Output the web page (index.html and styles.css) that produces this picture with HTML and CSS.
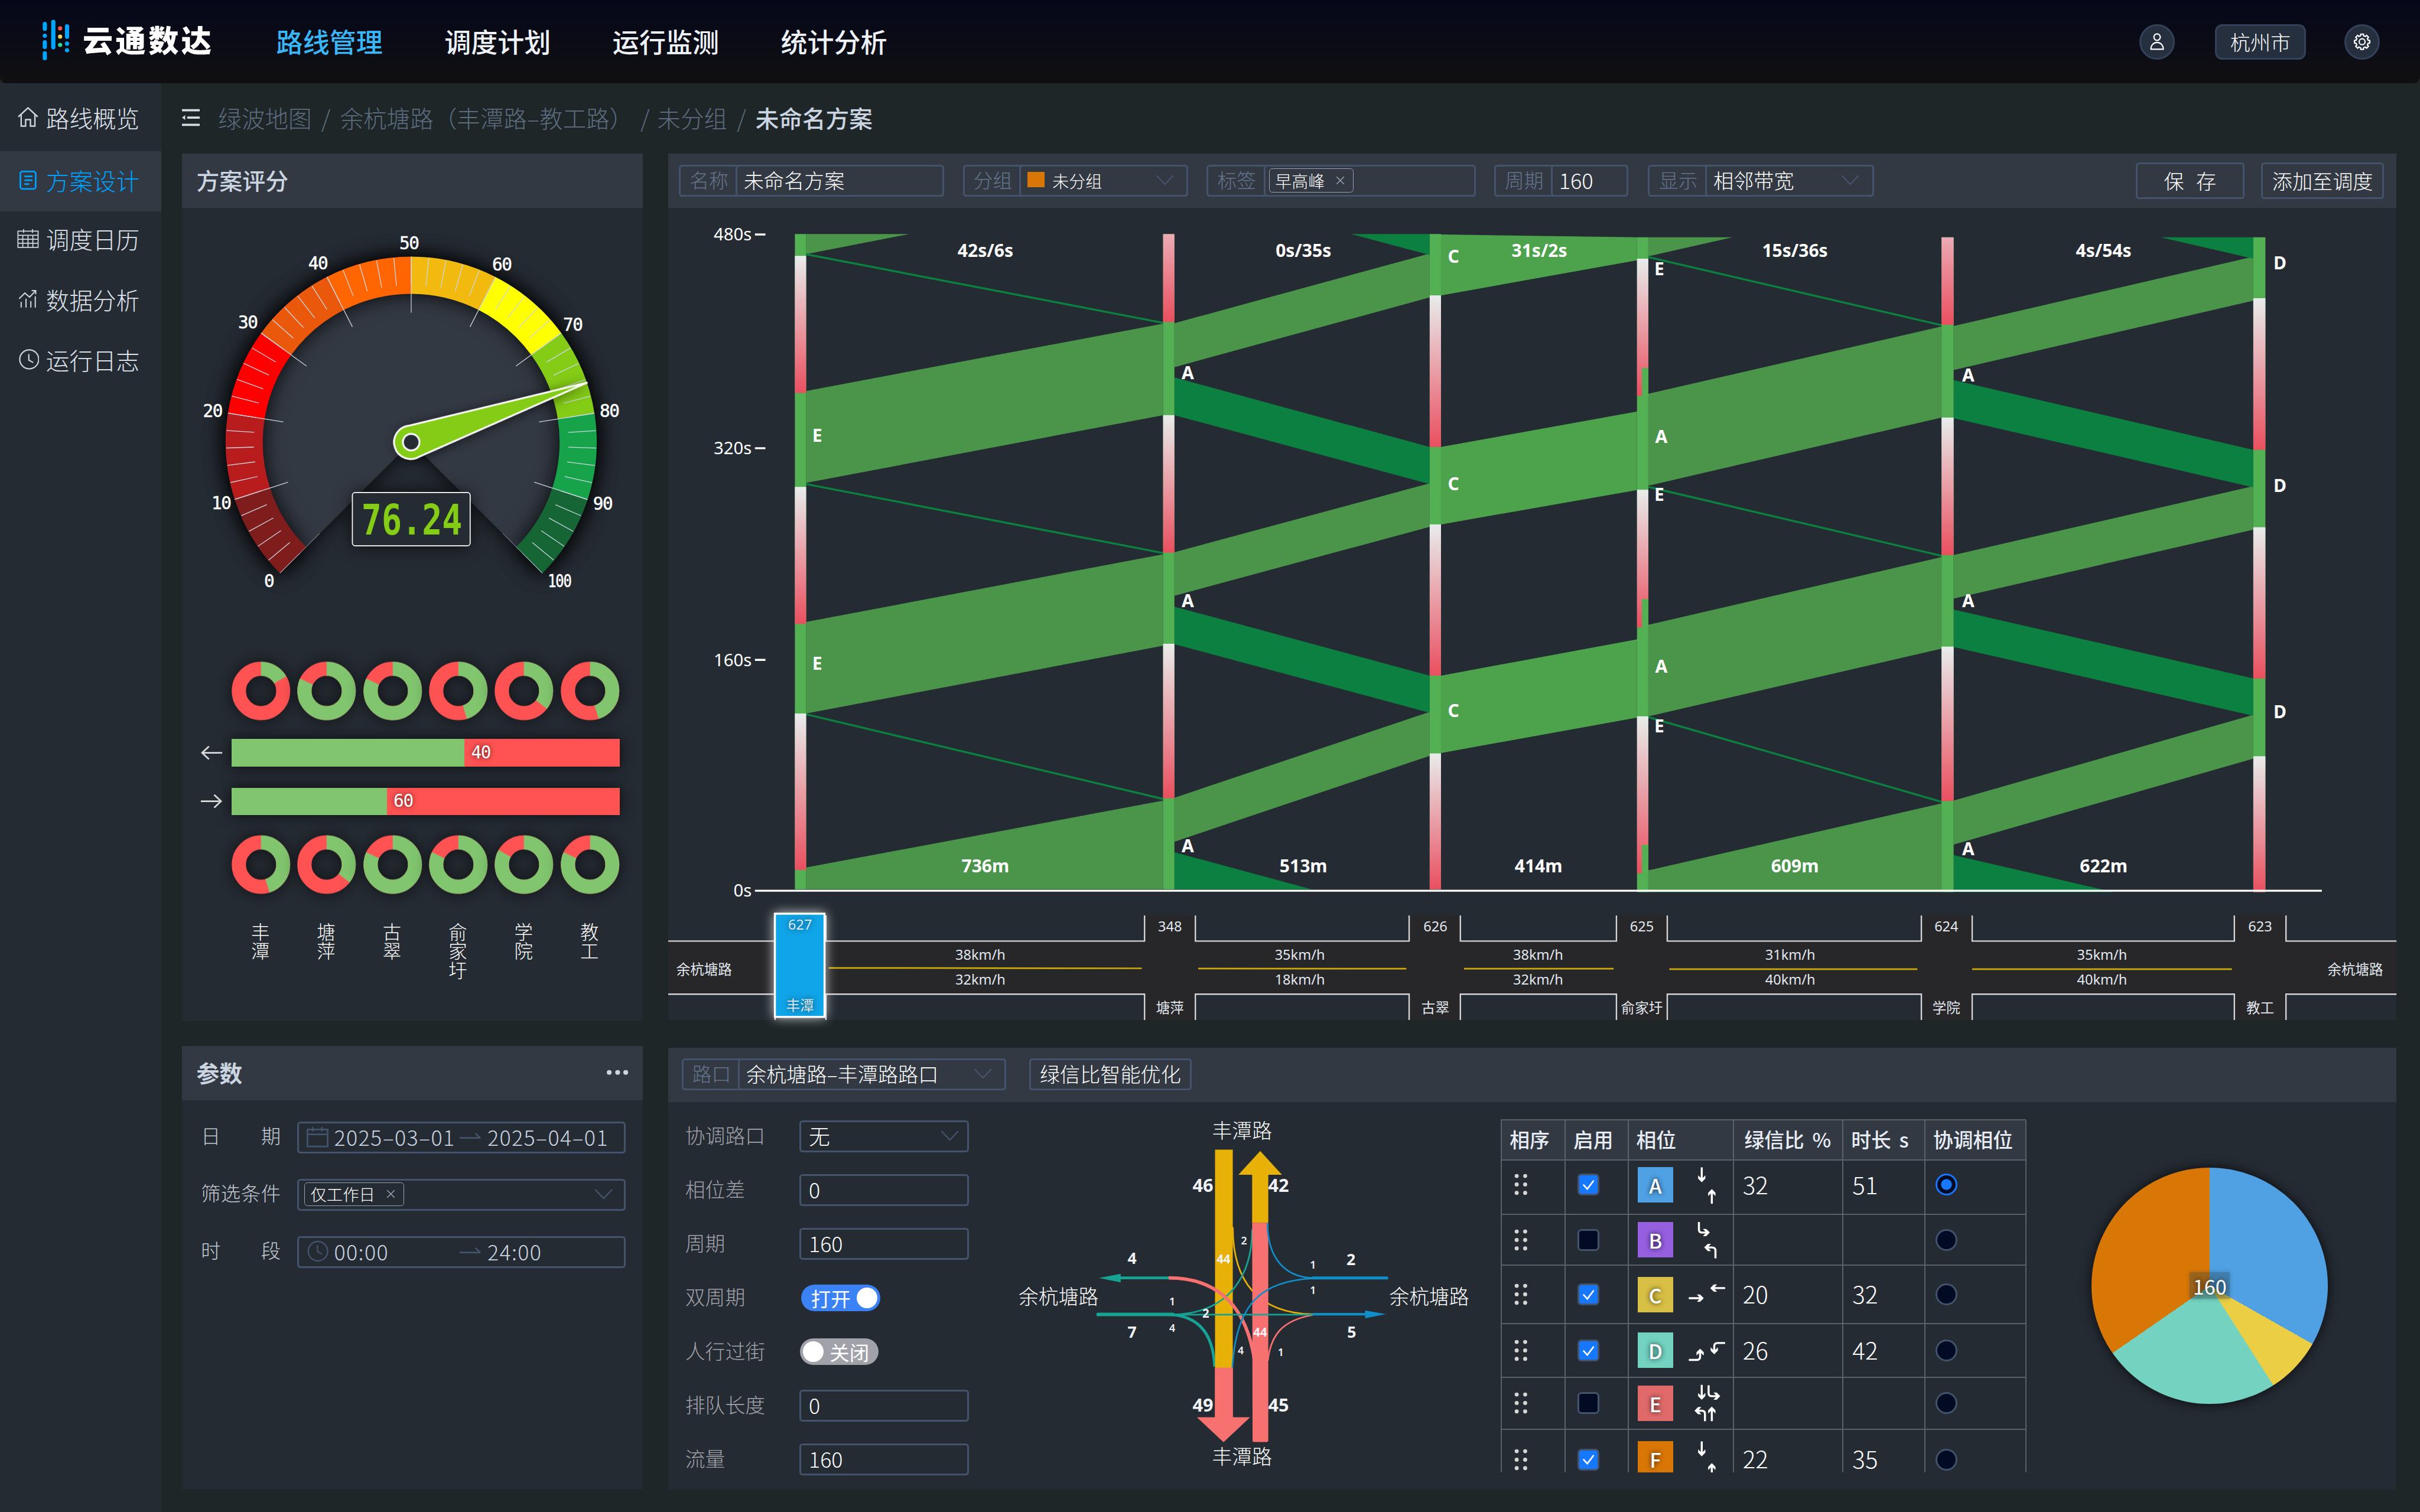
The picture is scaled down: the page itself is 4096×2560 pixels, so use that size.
FILE: index.html
```html
<!DOCTYPE html>
<html lang="zh-CN">
<head>
<meta charset="utf-8">
<title>云通数达 - 方案设计</title>
<link rel="stylesheet" href="styles.css">
</head>
<body>
<svg class="defs" width="0" height="0" aria-hidden="true">
  <defs>
    <linearGradient id="red" x1="0" y1="0" x2="0" y2="1"><stop offset="0" stop-color="#e8ecec"/><stop offset="1" stop-color="#ea4f5f"/></linearGradient>
    <linearGradient id="redCut" x1="0" y1="0" x2="0" y2="1"><stop offset="0" stop-color="#ebabb5"/><stop offset="1" stop-color="#ea4f5f"/></linearGradient>
    <path id="head" d="M0 0L-9 -9V-17L-2.5 -11H2.5L9 -17V-9Z"/>
    <symbol id="chevron" viewBox="0 0 46 28"><path d="M2 3L23 25L44 3" fill="none" stroke="#43536b" stroke-width="3.5"/></symbol>
    <symbol id="close" viewBox="0 0 24 24"><path d="M2 2L22 22M22 2L2 22" fill="none" stroke="#94a3b8" stroke-width="2.5"/></symbol>
    <symbol id="swap" viewBox="0 0 52 24"><path d="M0 14H51L39 3" fill="none" stroke="#43536b" stroke-width="4"/></symbol>
    <symbol id="grip" viewBox="0 0 34 54"><g fill="#d6d6d6"><circle cx="6" cy="6" r="5"/><circle cx="27" cy="6" r="5"/><circle cx="6" cy="27" r="5"/><circle cx="27" cy="27" r="5"/><circle cx="6" cy="48" r="5"/><circle cx="27" cy="48" r="5"/></g></symbol>
  </defs>
</svg>

<header class="topbar">
  <div class="brand">
    <svg class="brand-mark" viewBox="106 49 67 102">
      <g stroke="#00a6ff" stroke-width="10.4" stroke-linecap="round">
        <path d="M111.6 60V72M111.6 89.3V89.4M111.6 105.500V117M111.600 133V145M132.700 55V118M166.800 66V92M166.800 108.900V109M166.800 125.200V125.300"/>
      </g>
      <circle cx="149.600" cy="71" r="5.200" fill="#ff534b"/><circle cx="149.600" cy="91.500" r="5.200" fill="#f6d45c"/><circle cx="149.600" cy="112" r="5.200" fill="#2fd795"/>
    </svg>
    <span class="brand-name">云通数达</span>
  </div>
  <nav class="menu">
    <a class="menu-item is-active">路线管理</a>
    <a class="menu-item">调度计划</a>
    <a class="menu-item">运行监测</a>
    <a class="menu-item">统计分析</a>
  </nav>
  <div class="account">
    <span class="round-btn"><svg viewBox="0 0 44 48"><g fill="none" stroke="#fff" stroke-width="3.4" stroke-linejoin="round"><circle cx="22" cy="12" r="8.300"/><path d="M6 43.500C6 20 38 20 38 43.500Z"/></g></svg></span>
    <span class="city">杭州市</span>
    <span class="round-btn"><svg viewBox="0 0 44 44"><g fill="none" stroke="#fff" stroke-width="3.2" stroke-linejoin="round"><circle cx="22" cy="22" r="7.300"/><path d="M18.500 3H25.500V7L30 9L33 6L38 11L35 14L37 18.500H41V25.500H37L35 30L38 33L33 38L30 35L25.500 37V41H18.500V37L14 35L11 38L6 33L9 30L7 25.500H3V18.500H7L9 14L6 11L11 6L14 9L18.500 7Z"/></g></svg></span>
  </div>
</header>

<div class="shell">
  <aside class="sidebar">
    <a class="side-item"><svg viewBox="0 0 54 54"><path d="M3 26L27 4L51 26M10 21V49H21V33H33V49H44V21" fill="none" stroke="#cfd5df" stroke-width="3.500"/></svg>路线概览</a>
    <a class="side-item is-active"><svg viewBox="0 0 54 54"><g fill="none" stroke="#00a0ff" stroke-width="4"><rect x="8" y="5" width="38" height="43" rx="5"/><path d="M18 17H38M18 26.500H38M18 36H30"/></g></svg>方案设计</a>
    <a class="side-item"><svg viewBox="0 0 54 54"><path d="M2 8H52V48H2ZM2 18H52M2 28H52M2 38H52M14 18V48M27 18V48M39 18V48M16 3V12M38 3V12" fill="none" stroke="#cfd5df" stroke-width="2.600"/></svg>调度日历</a>
    <a class="side-item"><svg viewBox="0 0 54 54"><path d="M10 34V48M22 26V48M34 32V48M45 20V48M5 26L19 12L31 22L46 6M36 6H46V15" fill="none" stroke="#cfd5df" stroke-width="3"/></svg>数据分析</a>
    <a class="side-item"><svg viewBox="0 0 54 54"><g fill="none" stroke="#cfd5df" stroke-width="3.200"><circle cx="30" cy="27" r="23.500"/><path d="M29 14V29L40 35"/></g></svg>运行日志</a>
  </aside>

  <main class="content">
    <div class="crumbs">
      <svg class="crumb-icon" viewBox="0 0 44 44"><path d="M0 4H44M13 22H44M0 40H44" stroke="#d5dbe4" stroke-width="5.500"/><path d="M0 22L8 16V28Z" fill="#d5dbe4"/></svg>
      <span>绿波地图</span><i>/</i><span>余杭塘路（丰潭路–教工路）</span><i class="tight">/</i><span>未分组</span><i>/</i><b>未命名方案</b>
    </div>

    <div class="board">
      <div class="col-left">
        <section class="panel score">
          <h2 class="panel-head">方案评分</h2>
          <svg class="gauge" viewBox="451 515 1143 1125">
            <g transform="translate(1019.300 1096)">
              <g class="gauge-shadow">
                <path d="M0 0L-325.300 325.300A460 460 0 1 1 325.300 325.300Z" fill="#333943"/>
              </g>
              <g class="gauge-shadow ring" fill="none" stroke-width="92">
                <g transform="rotate(135)">
                  <circle r="414" pathLength="360" stroke-dasharray="27 333" stroke="#7f1d1d"/>
                  <circle r="414" pathLength="360" stroke-dasharray="27 333" stroke-dashoffset="-27" stroke="#b91c1c"/>
                  <circle r="414" pathLength="360" stroke-dasharray="27 333" stroke-dashoffset="-54" stroke="#ff0000"/>
                  <circle r="414" pathLength="360" stroke-dasharray="27 333" stroke-dashoffset="-81" stroke="#ea580c"/>
                  <circle r="414" pathLength="360" stroke-dasharray="27 333" stroke-dashoffset="-108" stroke="#ff6500"/>
                  <circle r="414" pathLength="360" stroke-dasharray="27 333" stroke-dashoffset="-135" stroke="#f2b90f"/>
                  <circle r="414" pathLength="360" stroke-dasharray="27 333" stroke-dashoffset="-162" stroke="#ffff00"/>
                  <circle r="414" pathLength="360" stroke-dasharray="27 333" stroke-dashoffset="-189" stroke="#84cc16"/>
                  <circle r="414" pathLength="360" stroke-dasharray="27 333" stroke-dashoffset="-216" stroke="#16a34a"/>
                  <circle r="414" pathLength="360" stroke-dasharray="27 333" stroke-dashoffset="-243" stroke="#166534"/>
                </g>
              </g>
              <path d="M-300.200 300.200A424.500 424.500 0 1 1 300.200 300.200" pathLength="270" fill="none" stroke="#cbd5e1" stroke-width="69" stroke-dasharray=".26 5.14" stroke-dashoffset=".13"/>
              <path d="M-276.100 276.100A390.500 390.500 0 1 1 276.100 276.100" pathLength="270" fill="none" stroke="#cbd5e1" stroke-width="139" stroke-dasharray=".28 26.72" stroke-dashoffset=".14"/>
              <g class="needle" transform="rotate(71.300)">
                <path d="M0 -460L-40.500 -8A41.500 41.500 0 1 0 40.500 -8Z" fill="#84cc16" stroke="#fff" stroke-width="4.500" stroke-linejoin="round"/>
                <circle r="20.500" fill="#252b33" stroke="#fff" stroke-width="4.500"/>
              </g>
            </g>
            <g class="lcd scale">
              <text x="666.500" y="1455">0</text><text x="548" y="1262">10</text><text x="527" y="1034">20</text><text x="614" y="814">30</text><text x="788" y="667">40</text><text x="1014" y="618">50</text><text x="1244" y="671">60</text><text x="1419.600" y="819">70</text><text x="1510.600" y="1034">80</text><text x="1494" y="1263">90</text><text x="1387" y="1456" textLength="58" lengthAdjust="spacingAndGlyphs">100</text>
            </g>
            <rect class="readout-box" x="873.500" y="1221" width="292" height="132" rx="7" fill="#252b33" stroke="#fff" stroke-width="2.500"/>
            <text class="lcd readout" x="1021" y="1325" textLength="250" lengthAdjust="spacingAndGlyphs">76.24</text>
          </svg>
          <div class="donuts">
            <svg viewBox="-73 -73 146 146"><circle r="55" stroke="#ff5252"/><circle r="55" stroke="#81c56e" pathLength="360" stroke-dasharray="60 300"/></svg>
            <svg viewBox="-73 -73 146 146"><circle r="55" stroke="#ff5252"/><circle r="55" stroke="#81c56e" pathLength="360" stroke-dasharray="295 65"/></svg>
            <svg viewBox="-73 -73 146 146"><circle r="55" stroke="#ff5252"/><circle r="55" stroke="#81c56e" pathLength="360" stroke-dasharray="295 65"/></svg>
            <svg viewBox="-73 -73 146 146"><circle r="55" stroke="#ff5252"/><circle r="55" stroke="#81c56e" pathLength="360" stroke-dasharray="163 197"/></svg>
            <svg viewBox="-73 -73 146 146"><circle r="55" stroke="#ff5252"/><circle r="55" stroke="#81c56e" pathLength="360" stroke-dasharray="128 232"/></svg>
            <svg viewBox="-73 -73 146 146"><circle r="55" stroke="#ff5252"/><circle r="55" stroke="#81c56e" pathLength="360" stroke-dasharray="163 197"/></svg>
          </div>
          <div class="ratio">
            <svg viewBox="0 0 54 34"><path d="M20 1L3 17L20 33M3 17H53" /></svg>
            <div class="ratio-bar"><div class="ratio-go" style="width:60%"></div><span class="lcd">40</span></div>
          </div>
          <div class="ratio">
            <svg viewBox="0 0 54 34"><path d="M33 1L50 17L33 33M50 17H0" /></svg>
            <div class="ratio-bar"><div class="ratio-go" style="width:40%"></div><span class="lcd">60</span></div>
          </div>
          <div class="donuts second">
            <svg viewBox="-73 -73 146 146"><circle r="55" stroke="#ff5252"/><circle r="55" stroke="#81c56e" pathLength="360" stroke-dasharray="163 197"/></svg>
            <svg viewBox="-73 -73 146 146"><circle r="55" stroke="#ff5252"/><circle r="55" stroke="#81c56e" pathLength="360" stroke-dasharray="128 232"/></svg>
            <svg viewBox="-73 -73 146 146"><circle r="55" stroke="#ff5252"/><circle r="55" stroke="#81c56e" pathLength="360" stroke-dasharray="295 65"/></svg>
            <svg viewBox="-73 -73 146 146"><circle r="55" stroke="#ff5252"/><circle r="55" stroke="#81c56e" pathLength="360" stroke-dasharray="295 65"/></svg>
            <svg viewBox="-73 -73 146 146"><circle r="55" stroke="#ff5252"/><circle r="55" stroke="#81c56e" pathLength="360" stroke-dasharray="300 60"/></svg>
            <svg viewBox="-73 -73 146 146"><circle r="55" stroke="#ff5252"/><circle r="55" stroke="#81c56e" pathLength="360" stroke-dasharray="295 65"/></svg>
          </div>
          <div class="names"><span>丰潭</span><span>塘萍</span><span>古翠</span><span>俞家圩</span><span>学院</span><span>教工</span></div>
        </section>

        <section class="panel params">
          <div class="panel-head spread"><h2>参数</h2><svg class="more" viewBox="0 0 54 14"><circle cx="6" cy="7" r="6"/><circle cx="27" cy="7" r="6"/><circle cx="47" cy="7" r="6"/></svg></div>
          <div class="param-form">
            <div class="param-row"><label><span>日</span><span>期</span></label>
              <div class="field"><svg class="f-icon" viewBox="0 0 54 54"><path d="M2 8H52V50H2ZM2 20H52M15 2V13M38 2V13" fill="none" stroke="#43536b" stroke-width="4"/></svg><span class="from date">2025–03–01</span><svg class="swap"><use href="#swap"/></svg><span class="date">2025–04–01</span></div></div>
            <div class="param-row"><label><span>筛</span><span>选</span><span>条</span><span>件</span></label>
              <div class="field"><span class="tag">仅工作日<svg><use href="#close"/></svg></span><svg class="chev"><use href="#chevron"/></svg></div></div>
            <div class="param-row"><label><span>时</span><span>段</span></label>
              <div class="field"><svg class="f-icon" viewBox="0 0 54 54"><g fill="none" stroke="#43536b" stroke-width="3.500"><circle cx="28" cy="27" r="24"/><path d="M27 12V28L38 34"/></g></svg><span class="from date">00:00</span><svg class="swap"><use href="#swap"/></svg><span class="date">24:00</span></div></div>
          </div>
        </section>
      </div>

      <div class="col-right">
        <section class="panel plan">
          <div class="panel-head tools">
            <div class="combo w-name"><span class="combo-label">名称</span><span class="combo-value">未命名方案</span></div>
            <div class="combo w-group"><span class="combo-label">分组</span><span class="combo-value"><i class="swatch"></i><em>未分组</em><svg class="chev"><use href="#chevron"/></svg></span></div>
            <div class="combo w-tags"><span class="combo-label">标签</span><span class="combo-value tags"><span class="tag">早高峰<svg><use href="#close"/></svg></span></span></div>
            <div class="combo w-cycle"><span class="combo-label">周期</span><span class="combo-value num">160</span></div>
            <div class="combo w-show"><span class="combo-label">显示</span><span class="combo-value">相邻带宽<svg class="chev"><use href="#chevron"/></svg></span></div>
            <button class="btn save">保存</button>
            <button class="btn add">添加至调度</button>
          </div>
          <svg class="wave" viewBox="1656 514 4285 2015">
            <!-- green bands between neighbouring junctions -->
            <g fill="#4a954a">
              <path d="M1998 579H2253L1998 628.500ZM1998 968L2883 801V1028L1998 1196ZM1998 1541L2883 1373V1600L1998 1768ZM1998 2150L2883 1984V2204H1998Z"/>
              <path d="M2911 800L3544 627V736L2911 909ZM2911 1368L3544 1197V1305L2911 1476ZM2911 1977L3544 1764V1873L2911 2086Z"/>
              <path d="M4086 587H4295L4086 634ZM4086 975L4813 808V1034L4086 1203ZM4086 1548L4813 1380V1607L4086 1775ZM4086 2157L4813 1991V2211H4086Z"/>
              <path d="M4843 807L5586 635V744L4843 916ZM4843 1375L5586 1204V1312L4843 1483ZM4843 1984L5586 1771V1880L4843 2093Z"/>
            </g>
            <path fill="#4ca34c" d="M3572 580L4058 587V644L3572 731ZM3572 1107L4058 1019V1214L3572 1299ZM3572 1674L4058 1584V1778L3572 1866Z"/>
            <g fill="#0c8040">
              <path d="M3349 579H3544V631ZM2911 934.500L3544 1107V1199L2911 1028ZM2911 1503L3544 1674V1766L2911 1596ZM2911 2112L3251 2204H2911Z"/>
              <path d="M5356 587H5586V640ZM4843 941L5586 1114V1207L4843 1035.500ZM4843 1510L5586 1681V1773.500L4843 1603ZM4843 2119L5240 2211H4843Z"/>
            </g>
            <path stroke="#0c8040" stroke-width="5" fill="none" d="M1998 629L2883 799M1998 1199L2883 1370M1998 1770L2883 1980M4086 636L4813 805M4086 1206L4813 1377M4086 1777L4813 1987"/>
            <!-- signal timing bars -->
            <g fill="#53b153">
              <path d="M1970 579h28V2204h-28ZM2883 579h28V2204h-28ZM3544 579h28V2204h-28ZM4058 587h28V2211h-28ZM4813 587h30V2211h-30ZM5586 587h30V2211h-30Z"/>
            </g>
            <g fill="url(#red)">
              <rect x="1970" y="633" width="28" height="340"/><rect x="1970" y="1206" width="28" height="340"/><rect x="1970" y="1768" width="28" height="388"/>
              <rect x="2883" y="1028" width="28" height="341"/><rect x="2883" y="1595" width="28" height="383"/>
              <rect x="3544" y="731" width="28" height="376"/><rect x="3544" y="1299" width="28" height="375"/><rect x="3544" y="1867" width="28" height="337"/>
              <rect x="4058" y="640" width="28" height="340"/><rect x="4058" y="1213" width="28" height="341"/><rect x="4058" y="1775" width="28" height="389"/>
              <rect x="4813" y="1034" width="30" height="341"/><rect x="4813" y="1602" width="30" height="383"/>
              <rect x="5586" y="738" width="30" height="376"/><rect x="5586" y="1306" width="30" height="375"/><rect x="5586" y="1874" width="30" height="337"/>
            </g>
            <rect x="2883" y="579" width="28" height="218" fill="url(#redCut)"/><rect x="4813" y="587" width="30" height="217" fill="url(#redCut)"/>
            <path fill="#53b153" d="M4070 911h16v70h-16ZM4070 1484h16v71h-16ZM4070 2094h16v71h-16Z"/>
            <path stroke="#fff" stroke-width="5" d="M1871 580H1897M1871 1110H1897M1871 1635H1897M1871 2207.500H5756"/>
            <g class="axis"><text x="1863" y="595">480s</text><text x="1863" y="1125">320s</text><text x="1863" y="1650">160s</text><text x="1863" y="2222">0s</text></g>
            <g class="mark mid">
              <text x="2442.500" y="635">42s/6s</text><text x="3231" y="635">0s/35s</text><text x="3816" y="635">31s/2s</text><text x="4449.500" y="635">15s/36s</text><text x="5215" y="635">4s/54s</text>
              <text x="2442.500" y="2162">736m</text><text x="3231" y="2162">513m</text><text x="3814" y="2162">414m</text><text x="4449.500" y="2162">609m</text><text x="5215" y="2162">622m</text>
            </g>
            <g class="mark">
              <text x="2013" y="1094">E</text><text x="2013" y="1660">E</text>
              <text x="2929" y="939">A</text><text x="2929" y="1504">A</text><text x="2929" y="2112">A</text>
              <text x="3589" y="650">C</text><text x="3589" y="1214">C</text><text x="3589" y="1776">C</text>
              <text x="4101" y="681">E</text><text x="4103" y="1097">A</text><text x="4101" y="1241">E</text><text x="4103" y="1667">A</text><text x="4101" y="1815">E</text>
              <text x="4864" y="944">A</text><text x="4864" y="1504">A</text><text x="4864" y="2120">A</text>
              <text x="5636" y="666">D</text><text x="5636" y="1219">D</text><text x="5636" y="1780">D</text>
            </g>
            <!-- road strip -->
            <path fill="#272628" d="M1656 2332.500H5941V2464H1656ZM2837 2269H2963V2528H2837ZM3493 2269H3620V2528H3493ZM4007 2269H4133V2528H4007ZM4763 2269H4889V2528H4763ZM5539 2269H5667V2528H5539Z"/>
            <path fill="none" stroke="#d4d4d8" stroke-width="3.500" d="M1656 2332.500H1921V2269M2047 2269V2332.500H2837V2269M2963 2269V2332.500H3493V2269M3620 2269V2332.500H4007V2269M4133 2269V2332.500H4763V2269M4889 2269V2332.500H5539V2269M5667 2269V2332.500H5941M1656 2464H1921V2528M2047 2528V2464H2837V2528M2963 2528V2464H3493V2528M3620 2528V2464H4007V2528M4133 2528V2464H4763V2528M4889 2528V2464H5539V2528M5667 2528V2464H5941"/>
            <path stroke="#cdaa08" stroke-width="4" d="M2054 2399L2830 2400M2970 2400.500L3486 2401M3629 2401H4000M4138 2402H4753M4889 2402H5533"/>
            <rect class="here" x="1920.500" y="2264.500" width="123" height="256" fill="#10a5e9" stroke="#fff" stroke-width="5"/>
            <g class="road mid">
              <g class="here-text"><text x="1983" y="2304">627</text><text x="1983" y="2505">丰潭</text></g>
              <text x="2900" y="2309">348</text><text x="3558" y="2309">626</text><text x="4070" y="2309">625</text><text x="4825" y="2309">624</text><text x="5603" y="2309">623</text>
              <text x="2900" y="2511">塘萍</text><text x="3558" y="2511">古翠</text><text x="4070" y="2511">俞家圩</text><text x="4825" y="2511">学院</text><text x="5603" y="2511">教工</text>
              <text x="1745" y="2415">余杭塘路</text><text x="5839" y="2415">余杭塘路</text>
              <text x="2430" y="2379">38km/h</text><text x="3222" y="2379">35km/h</text><text x="3813" y="2379">38km/h</text><text x="4438" y="2379">31km/h</text><text x="5211" y="2379">35km/h</text>
              <text x="2430" y="2441">32km/h</text><text x="3222" y="2441">18km/h</text><text x="3813" y="2441">32km/h</text><text x="4438" y="2441">40km/h</text><text x="5211" y="2441">40km/h</text>
            </g>
          </svg>
        </section>

        <section class="panel junction">
          <div class="panel-head tools">
            <div class="combo w-junction"><span class="combo-label">路口</span><span class="combo-value">余杭塘路–丰潭路路口<svg class="chev"><use href="#chevron"/></svg></span></div>
            <button class="btn smart">绿信比智能优化</button>
          </div>
          <div class="junction-body">
            <div class="j-form">
              <div class="j-row"><label>协调路口</label><div class="field">无<svg class="chev"><use href="#chevron"/></svg></div></div>
              <div class="j-row"><label>相位差</label><div class="field">0</div></div>
              <div class="j-row"><label>周期</label><div class="field">160</div></div>
              <div class="j-row"><label>双周期</label><div class="switch on">打开<i></i></div></div>
              <div class="j-row"><label>人行过街</label><div class="switch"><i></i>关闭</div></div>
              <div class="j-row"><label>排队长度</label><div class="field">0</div></div>
              <div class="j-row"><label>流量</label><div class="field">160</div></div>
            </div>

            <svg class="flow" viewBox="2500 2731 1150 964">
              <g fill="none">
                <path d="M2903 3261C2980 3266 3008 3320 3011 3390" stroke="#16a394" stroke-width="7"/>
                <path d="M3056 3044C3056 3180 3120 3258 3254 3260" stroke="#e8b108" stroke-width="4"/>
              </g>
              <path d="M3012 2852H3056V3393H3012Z" fill="#e8b108"/>
              <path d="M3012 3393H3056V3516H3098L3033 3577L2968 3516H3012Z" fill="#f87171" stroke="#f87171" stroke-linejoin="round"/>
              <path d="M2907 3261C3050 3258 3104 3160 3104 3050" fill="none" stroke="#16a394" stroke-width="4"/>
              <path d="M2897 3170C3000 3170 3085 3220 3109 3369" fill="none" stroke="#f87171" stroke-width="8.500"/>
              <path d="M3104 3033V2914H3070L3124 2855L3178 2914H3144V3033Z" fill="#e8b108"/>
              <path d="M3104 3033H3144V3573Q3144 3577 3140 3577H3109Q3105 3577 3105 3573Z" fill="#f87171"/>
              <path d="M3143 3375C3150 3310 3180 3275 3254 3262" fill="none" stroke="#f87171" stroke-width="4"/>
              <path d="M2907 3261H3254" stroke="#16a394" stroke-width="4"/>
              <path d="M2722 3260.500H2907" stroke="#16a394" stroke-width="9" stroke-linecap="round"/>
              <path d="M2897 3170H2776" stroke="#16a394" stroke-width="7"/><path d="M2724 3170L2778 3160V3181Z" fill="#16a394"/>
              <g fill="none" stroke="#118dc8" stroke-width="4">
                <path d="M3259 3170C3185 3170 3142 3120 3142 3034"/>
                <path d="M3259 3171C3130 3176 3064 3230 3055 3392"/>
              </g>
              <path d="M3255 3170H3438" stroke="#118dc8" stroke-width="7.500" stroke-linecap="round"/>
              <path d="M3254 3260H3386" stroke="#118dc8" stroke-width="6"/><path d="M3384 3250.500V3270L3436 3260Z" fill="#118dc8"/>
              <g class="count big"><text x="2982" y="2956">46</text><text x="3169.500" y="2956">42</text><text x="2982" y="3501">49</text><text x="3169.500" y="3501">45</text></g>
              <g class="count mid"><text x="2806.500" y="3136">4</text><text x="2806.500" y="3318">7</text><text x="3349" y="3138">2</text><text x="3351" y="3318">5</text></g>
              <g class="count on"><text x="3033" y="3134">44</text><text x="3124" y="3315">44</text><text x="2989" y="3269">2</text></g>
              <g class="count small"><text x="3084" y="3087">2</text><text x="3255" y="3147">1</text><text x="3255" y="3210">1</text><text x="2906" y="3238">1</text><text x="2906" y="3304">4</text><text x="3076" y="3359">4</text><text x="3175" y="3364">1</text></g>
              <g class="street"><text x="3079" y="2824">丰潭路</text><text x="3079" y="3632">丰潭路</text><text x="2624" y="3235">余杭塘路</text><text x="3543" y="3235">余杭塘路</text></g>
            </svg>

            <div class="phases">
              <div class="ph-row ph-head"><div>相序</div><div>启用</div><div>相位</div><div>绿信比 %</div><div>时长 s</div><div>协调相位</div></div>
              <div class="ph-row r-a"><div><svg class="grip"><use href="#grip"/></svg></div><div><span class="check on"><svg viewBox="0 0 40 40"><path d="M7 20L17 31L33 10"/></svg></span></div><div><b class="phase p-a">A</b><svg class="moves" viewBox="0 0 105 100"><path d="M40 8V36M65 98V70"/><use href="#head" transform="translate(40 45)"/><use href="#head" transform="translate(65 62) rotate(180)"/></svg></div><div>32</div><div>51</div><div><span class="radio on"></span></div></div>
              <div class="ph-row r-b"><div><svg class="grip"><use href="#grip"/></svg></div><div><span class="check"></span></div><div><b class="phase p-b">B</b><svg class="moves" viewBox="0 0 105 100"><path d="M33 6V24Q33 32 41 32H50M74 96V77Q74 69 66 69H56"/><use href="#head" transform="translate(60 32) rotate(-90)"/><use href="#head" transform="translate(46 69) rotate(90)"/></svg></div><div></div><div></div><div><span class="radio"></span></div></div>
              <div class="ph-row r-c"><div><svg class="grip"><use href="#grip"/></svg></div><div><span class="check on"><svg viewBox="0 0 40 40"><path d="M7 20L17 31L33 10"/></svg></span></div><div><b class="phase p-c">C</b><svg class="moves" viewBox="0 0 105 100"><path d="M8 60H36M98 35H70"/><use href="#head" transform="translate(45 60) rotate(-90)"/><use href="#head" transform="translate(61 35) rotate(90)"/></svg></div><div>20</div><div>32</div><div><span class="radio"></span></div></div>
              <div class="ph-row r-d"><div><svg class="grip"><use href="#grip"/></svg></div><div><span class="check on"><svg viewBox="0 0 40 40"><path d="M7 20L17 31L33 10"/></svg></span></div><div><b class="phase p-d">D</b><svg class="moves" viewBox="0 0 105 100"><path d="M8 74H28Q36 74 36 66V56M98 32H79Q71 32 71 40V50"/><use href="#head" transform="translate(36 46) rotate(180)"/><use href="#head" transform="translate(71 60)"/></svg></div><div>26</div><div>42</div><div><span class="radio"></span></div></div>
              <div class="ph-row r-e"><div><svg class="grip"><use href="#grip"/></svg></div><div><span class="check"></span></div><div><b class="phase p-e">E</b><svg class="moves" viewBox="0 0 105 100"><path d="M40 4V32M57 5V24Q57 32 65 32H76M48 94V76Q48 68 40 68H32M65 94V68"/><use href="#head" transform="translate(40 41)"/><use href="#head" transform="translate(86 32) rotate(-90)"/><use href="#head" transform="translate(22 68) rotate(90)"/><use href="#head" transform="translate(65 58) rotate(180)"/></svg></div><div></div><div></div><div><span class="radio"></span></div></div>
              <div class="ph-row r-f"><div><svg class="grip"><use href="#grip"/></svg></div><div><span class="check on"><svg viewBox="0 0 40 40"><path d="M7 20L17 31L33 10"/></svg></span></div><div><b class="phase p-f">F</b><svg class="moves" viewBox="0 0 105 85"><path d="M40 8V36M65 98V70"/><use href="#head" transform="translate(40 45)"/><use href="#head" transform="translate(65 62) rotate(180)"/></svg></div><div>22</div><div>35</div><div><span class="radio"></span></div></div>
            </div>

            <div class="pie-wrap"><div class="pie"><span>160</span></div></div>
          </div>
        </section>
      </div>
    </div>
  </main>
</div>
</body>
</html>
```
FILE: styles.css
```css
/* 1rem = 1/60 of the window width, so the whole board scales with the window */
html { font-size: calc(100vw / 60); }
* { box-sizing: border-box; }
body {
  margin: 0; width: 60rem; height: 37.5rem; overflow: hidden;
  background: #1e2628; color: #fff;
  font-family: "Noto Sans CJK SC", "Noto Sans", sans-serif; font-weight: 300; font-size: .5rem; line-height: 1;
}
h2 { margin: 0; font-size: .57rem; font-weight: 500; line-height: 1; }
i, em { font-style: normal; }
svg { display: block; flex: none; }
.defs { height: 0; float: left; }

.topbar {
  display: flex; align-items: center; height: 2.07rem; padding: 0 1rem 0 1.06rem;
  background: linear-gradient(#06071a, #101012); border-radius: 0 0 .16rem .16rem;
}
.brand { display: flex; align-items: center; width: 5.79rem; margin-top: -.07rem; }
.brand-mark { width: .67rem; height: 1.02rem; margin-right: .32rem; }
.brand-name { font-size: .75rem; font-weight: 900; letter-spacing: .065rem; white-space: nowrap; padding-bottom: .05rem; }
.menu { display: flex; gap: 1.53rem; flex: 1; padding-bottom: .03rem; }
.menu-item { font-size: .66rem; font-weight: 500; color: #eef2f9; }
.menu-item.is-active { color: #38b6f6; }
.account { display: flex; align-items: center; gap: .97rem; }
.round-btn {
  display: flex; align-items: center; justify-content: center; width: .88rem; height: .88rem;
  border-radius: 50%; background: #262f3d; border: .045rem solid #33415a;
}
.round-btn svg { width: .44rem; height: .46rem; }
.city {
  display: flex; align-items: center; justify-content: center; width: 2.25rem; height: .88rem; margin: 0 -.02rem 0 .03rem; padding-bottom: .03rem;
  border-radius: .18rem; background: #262f3d; border: .045rem solid #33415a; font-size: .5rem;
}

.shell { display: flex; height: 35.43rem; }
.sidebar { width: 4rem; background: #252b33; padding-top: .12rem; color: #dfe4ec; }
.side-item { display: flex; align-items: center; gap: .17rem; height: 1.5rem; padding: 0 0 .06rem .43rem; font-size: .58rem; }
.side-item svg { width: .54rem; height: .54rem; }
.side-item.is-active { margin: .06rem 0 -.05rem; background: #333943; color: #00a0ff; }

.content { flex: 1; padding-left: .51rem; }
.crumbs { display: flex; align-items: center; height: 1.74rem; padding-bottom: .05rem; font-size: .58rem; color: #5d6b7f; white-space: nowrap; }
.crumbs i { width: .7rem; text-align: center; }
.crumbs i.tight { width: .6rem; }
.crumbs b { font-weight: 500; color: #cbd5e1; }
.crumb-icon { width: .44rem; height: .44rem; margin-right: .46rem; }

.board { display: flex; gap: .63rem; align-items: flex-start; }
.col-left { width: 11.43rem; display: flex; flex-direction: column; gap: .62rem; }
.col-right { width: 42.85rem; display: flex; flex-direction: column; gap: .69rem; }
.panel { background: #252b33; }
.panel-head { display: flex; align-items: center; height: 1.34rem; padding: 0 .36rem .04rem; background: #333943; color: #cbd5e1; }
.spread { justify-content: space-between; }
.more { width: .54rem; height: .14rem; fill: #cbd5e1; }

/* score panel */
.score { height: 21.52rem; }
.gauge { width: 11.43rem; height: 11.25rem; }
.gauge-shadow { filter: drop-shadow(0 0 26px rgba(0, 0, 0, .85)); }
.needle { filter: drop-shadow(4px -4px 14px rgba(0, 0, 0, .55)); }
.readout-box { filter: drop-shadow(0 0 20px rgba(0, 0, 0, .7)); }
.lcd { font-family: "DejaVu Sans Mono", monospace; font-weight: 400; fill: #fff; text-anchor: middle; }
.scale { font-size: 43px; letter-spacing: -2px; stroke: #fff; stroke-width: .8px; }
.readout { font-size: 103px; fill: #84cc16; font-weight: 700; }
.donuts { display: flex; justify-content: space-between; padding: 0 .58rem 0 1.23rem; }
.donuts svg { width: 1.46rem; height: 1.46rem; transform: rotate(-90deg); overflow: visible; filter: drop-shadow(0 0 .2rem rgba(0, 0, 0, .6)); }
.donuts circle { fill: none; stroke-width: 35; }
.donuts.second { margin-top: .5rem; }
.ratio { display: flex; align-items: center; gap: .22rem; margin-top: .53rem; padding: 0 .58rem 0 .47rem; }
.donuts + .ratio { margin-top: .47rem; }
.ratio > svg { width: .54rem; height: .34rem; fill: none; stroke: #dcdcdc; stroke-width: 4; }
.ratio-bar { display: flex; align-items: center; flex: 1; height: .68rem; background: #ff5252; box-shadow: 0 0 .35rem rgba(0, 0, 0, .7); }
.ratio-go { height: 100%; background: #81c56e; }
.ratio-bar .lcd { margin-left: .17rem; font-size: .43rem; letter-spacing: -.02rem; text-shadow: 0 0 .12rem rgba(0, 0, 0, .7); }
.names { display: flex; justify-content: space-between; padding: .7rem .6rem 0 1.21rem; font-size: .46rem; }
.names span { width: 1.46rem; display: flex; align-items: center; writing-mode: vertical-rl; letter-spacing: .02rem; line-height: 1.46rem; }

/* fields */
.field {
  display: flex; align-items: center; height: .79rem; padding: 0 .19rem .03rem; border: .045rem solid #43536b;
  border-radius: .08rem; font-size: .525rem; white-space: nowrap;
}
.date { letter-spacing: .02rem; margin-right: -.02rem; }
.chev { width: .46rem; height: .28rem; margin-left: auto; }
.tag {
  display: flex; align-items: center; gap: .28rem; height: .6rem; padding: 0 .2rem 0 .14rem;
  border: .02rem solid #94a3b8; border-radius: .08rem; font-size: .41rem;
}
.tag svg { width: .22rem; height: .22rem; }

/* parameters panel */
.params { height: 11rem; }
.params h2 { font-weight: 700; }
.param-form { display: flex; flex-direction: column; gap: .63rem; padding: .53rem .42rem 0 .47rem; }
.param-row { display: flex; justify-content: space-between; }
.param-row label { display: flex; justify-content: space-between; width: 1.98rem; margin-top: .09rem; font-size: .49rem; color: #c3c9d3; }
.param-row .field { width: 8.15rem; color: #cbd5e1; padding-right: .28rem; }
.param-row .tag { margin-left: -.06rem; color: #fff; font-size: .4rem; }
.f-icon { width: .54rem; height: .54rem; margin-right: .14rem; }
.from { width: 3.14rem; }
.swap { width: .52rem; height: .24rem; margin-right: .16rem; }

/* toolbar */
.tools { padding: 0 .31rem 0 .265rem; }
.junction .tools { padding-left: .33rem; padding-bottom: .04rem; }
.combo { display: flex; height: .79rem; border: .045rem solid #43536b; border-radius: .08rem; font-size: .5rem; color: #fff; }
.combo-label { display: flex; align-items: center; justify-content: center; padding-bottom: .03rem; color: #64748b; font-size: .48rem; }
.combo-value {
  display: flex; align-items: center; flex: 1; margin: -.045rem; padding: 0 .31rem .04rem .16rem;
  border: .045rem solid #43536b; border-radius: .08rem; white-space: nowrap;
}
.combo-value.tags { padding: 0 0 0 .09rem; }
.combo-value.num { font-size: .53rem; }
.combo em { font-size: .41rem; margin: .04rem 0 0 .2rem; }
.swatch { width: .42rem; height: .38rem; background: #d97706; }
.w-name { width: 6.58rem; margin-right: .465rem; } .w-name .combo-label { width: 1.4rem; }
.w-group { width: 5.58rem; margin-right: .45rem; } .w-group .combo-label { width: 1.39rem; }
.w-tags { width: 6.68rem; margin-right: .45rem; } .w-tags .combo-label { width: 1.42rem; }
.w-cycle { width: 3.33rem; margin-right: .49rem; } .w-cycle .combo-label { width: 1.41rem; }
.w-show { width: 5.6rem; margin-right: auto; } .w-show .combo-label { width: 1.42rem; }
.w-junction { width: 8.05rem; margin-right: .57rem; } .w-junction .combo-label { width: 1.4rem; }
.btn {
  height: .9rem; padding: 0 0 .03rem; border: .045rem solid #43536b; border-radius: .08rem; background: none; color: #fff;
  font: inherit; font-size: .5rem; white-space: nowrap;
}
.save { width: 2.7rem; margin-right: .41rem; letter-spacing: .3rem; text-indent: .3rem; }
.add { width: 3.05rem; }
.smart { width: 4.02rem; height: .79rem; }

/* green wave chart */
.plan { height: 21.49rem; }
.wave { width: 42.85rem; height: 20.15rem; overflow: visible; font-family: "Noto Sans", "Noto Sans CJK SC", sans-serif; }
.mid { text-anchor: middle; }
.axis { font-size: 43px; font-weight: 400; fill: #fff; text-anchor: end; }
.mark { font-size: 44px; font-weight: 700; fill: #fff; }
.road { font-size: 34.500px; font-weight: 400; fill: #e2e8f0; }
.here { filter: drop-shadow(0 0 14px rgba(255, 255, 255, .75)); }
.here-text { filter: drop-shadow(0 0 8px rgba(0, 0, 0, .6)); }

/* junction panel */
.junction { height: 10.97rem; }
.junction-body { display: flex; height: 9.63rem; }
.j-form { width: 8.44rem; padding: .46rem 0 0 .42rem; }
.j-row { display: flex; align-items: center; height: .79rem; margin-bottom: .545rem; }
.j-row label { width: 2.83rem; font-size: .495rem; color: #a1a1aa; margin-top: -.06rem; }
.j-row .field { width: 4.2rem; }
.switch {
  display: flex; align-items: center; justify-content: space-between; width: 1.96rem; height: .67rem; margin-left: .05rem;
  padding: 0 .08rem 0 .24rem; border-radius: .34rem; background: #a1a1aa; font-size: .49rem; font-weight: 400;
}
.switch:not(.on) { padding: 0 .24rem 0 .08rem; margin-left: .01rem; }
.switch.on { background: #3b82f6; }
.switch i { width: .51rem; height: .51rem; border-radius: 50%; background: #fff; }

.flow { width: 11.5rem; height: 9.64rem; margin-top: -.02rem; }
.count { font-family: "Noto Sans", sans-serif; font-weight: 700; fill: #f1f3f8; text-anchor: middle; }
.count.big { font-size: 45px; }
.count.mid { font-size: 39px; }
.count.on { font-size: 30px; }
.count.small { font-size: 26px; font-weight: 600; }
.street { font-size: 49.500px; fill: #fff; text-anchor: middle; }

.phases { width: 13.02rem; height: 8.76rem; margin: .43rem 0 0 .7rem; border: solid #5c6069; border-width: .04rem 0 0 .04rem; font-size: .59rem; }
.ph-row { display: grid; grid-template-columns: 1.58rem 1.56rem 2.61rem 2.72rem 2.03rem 2.5rem; }
.ph-row > div { display: flex; align-items: center; padding-left: .22rem; border: solid #5c6069; border-width: 0 .04rem .04rem 0; }
.ph-row > div:nth-child(4):not(:empty), .ph-row > div:nth-child(5):not(:empty) { padding-bottom: .04rem; }
.ph-head { height: 1rem; background: #333943; color: #e8edf5; font-size: .495rem; font-weight: 500; white-space: nowrap; }
.ph-head > div { padding: 0 0 .04rem .19rem; word-spacing: .09rem; }
.ph-head > div:nth-child(4) { padding-left: .26rem; }
.r-a { height: 1.35rem; } .ph-row.r-a > div:nth-child(n) { padding-bottom: .14rem; }
.r-b { height: 1.26rem; } .r-c { height: 1.44rem; } .r-d { height: 1.33rem; } .r-e { height: 1.3rem; } .r-f { height: 1.04rem; }
.r-f > div { align-items: flex-start; padding-top: .46rem; border-bottom: 0; }
.r-f > div:nth-child(3) { padding-top: .27rem; }
.r-f > div:nth-child(4), .r-f > div:nth-child(5) { padding-top: .41rem; }
.ph-row > div:nth-child(1):has(.grip) { padding-left: .31rem; }
.ph-row > div:nth-child(2):has(.check) { padding-left: .3rem; }
.ph-row > div:nth-child(6):has(.radio) { padding-left: .25rem; }
.grip { width: .34rem; height: .54rem; }
.check { display: flex; align-items: center; justify-content: center; width: .54rem; height: .54rem; border: .045rem solid #43536b; border-radius: .1rem; background: #020a24; }
.check.on { background: #1677ff; }
.check svg { width: .4rem; height: .4rem; fill: none; stroke: #fff; stroke-width: 3.800; }
.radio { width: .54rem; height: .54rem; border: .045rem solid #43536b; border-radius: 50%; background: #020a24; }
.radio.on { border-color: #1677ff; background: radial-gradient(circle, #1677ff .125rem, #020a24 .14rem); }
.phase {
  display: flex; align-items: center; justify-content: center; width: .89rem; height: .88rem; flex: none; font-size: .5rem; font-weight: 500;
  text-shadow: 0 0 .12rem rgba(0, 0, 0, .8);
}
.p-a { background: #4fa1e4; } .p-b { background: #955fdf; } .p-c { background: #d8bf45; }
.p-d { background: #73d2c0; } .p-e { background: #e06a6a; }
.p-f { background: #d97706; height: .78rem; padding-top: .1rem; }
.moves { width: 1.05rem; height: 1rem; margin-left: .3rem; fill: none; stroke: #fff; stroke-width: 5; }
.r-f .moves { height: .85rem; margin-top: -.07rem; }
.moves use { fill: #fff; stroke: none; }

.pie-wrap { flex: 1; padding: 1.63rem 0 0 1.63rem; }
.pie {
  display: flex; align-items: center; justify-content: center; width: 5.86rem; height: 5.86rem; border-radius: 50%;
  background: conic-gradient(#4fa1e4 119.5deg, #ecce45 0 147.4deg, #73d2c0 0 235.3deg, #d97706 0);
  box-shadow: 0 0 .3rem rgba(0, 0, 0, .75);
}
.pie span { padding: .08rem; font-size: .5rem; font-weight: 400; background: rgba(40, 60, 70, .35); box-shadow: 0 0 .1rem rgba(40, 60, 70, .35); text-shadow: 0 0 .12rem rgba(0, 0, 0, .8); }
```
